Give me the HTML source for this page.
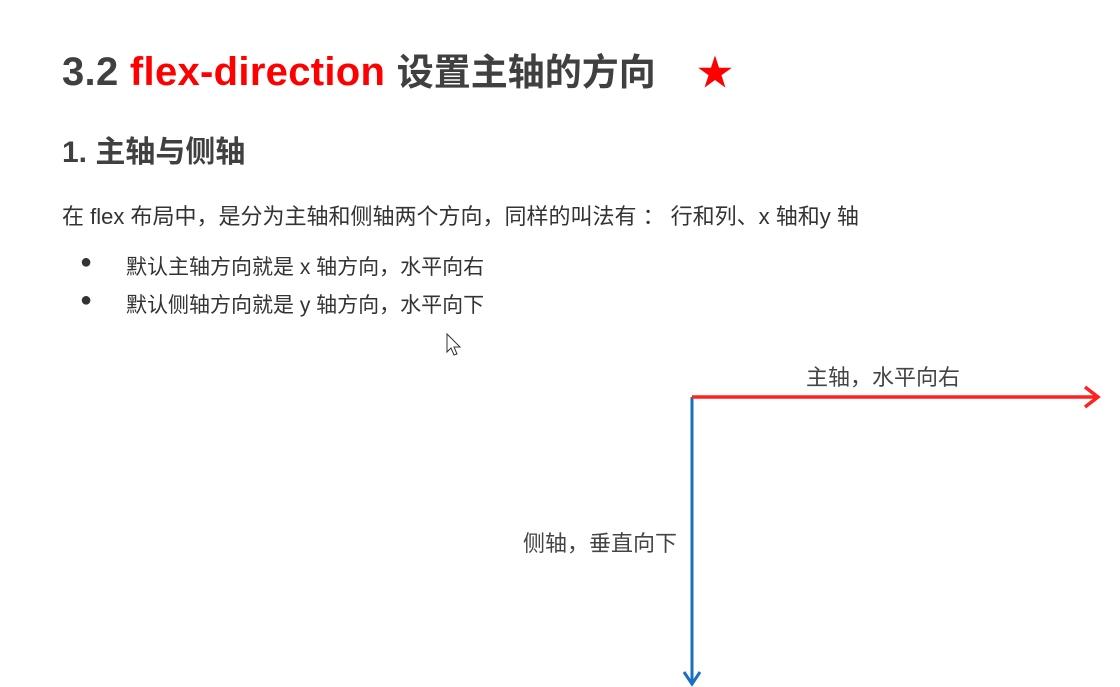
<!DOCTYPE html>
<html><head><meta charset="utf-8"><style>
body{margin:0;width:1120px;height:687px;background:#fff;position:relative;overflow:hidden;font-family:"Liberation Sans","Noto Sans CJK SC",sans-serif;color:#333}
.a{position:absolute;white-space:nowrap}
</style></head><body>
<div class="a" style="left:62px;top:42px;font-size:40px;font-weight:bold;color:#404040;letter-spacing:0.3px">3.2 <span style="color:#f00">flex-direction</span> <span style="font-size:37px;letter-spacing:0">设置主轴的方向</span></div>
<div class="a" style="left:697px;top:44px;font-size:36px;color:#f00">★</div>
<div class="a" style="left:62px;top:127px;font-size:30px;font-weight:bold;color:#404040">1. 主轴与侧轴</div>
<div class="a" style="left:62px;top:199px;font-size:22px;color:#333">在 flex 布局中，是分为主轴和侧轴两个方向，同样的叫法有 ： 行和列、x 轴和y 轴</div>
<div class="a" style="left:80px;top:251px;font-size:20px">●</div>
<div class="a" style="left:126px;top:251px;font-size:21px">默认主轴方向就是 x 轴方向，水平向右</div>
<div class="a" style="left:80px;top:289px;font-size:20px">●</div>
<div class="a" style="left:126px;top:289px;font-size:21px">默认侧轴方向就是 y 轴方向，水平向下</div>
<div class="a" style="left:806px;top:360px;font-size:22px;color:#444">主轴，水平向右</div>
<div class="a" style="left:523px;top:526px;font-size:22px;color:#444">侧轴，垂直向下</div>
<svg class="a" style="left:0;top:0" width="1120" height="687">
<line x1="692" y1="397" x2="692" y2="684" stroke="#1a6fc0" stroke-width="3"/>
<polyline points="684,672 692,684 700,672" fill="none" stroke="#1a6fc0" stroke-width="3"/>
<line x1="692" y1="397" x2="1097" y2="397" stroke="#f22" stroke-width="3.5"/>
<polyline points="1085,387 1098,397 1085,407" fill="none" stroke="#f22" stroke-width="3.5"/>
<path d="M447,334 L447,352 L451,348 L454,355 L457,354 L454,347 L460,347 Z" fill="#fff" stroke="#333" stroke-width="1"/>
</svg>
</body></html>
